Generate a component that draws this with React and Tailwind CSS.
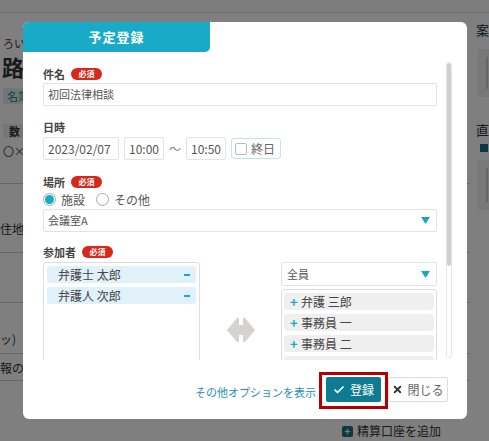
import { Check, X } from "lucide-react";

const font = { fontFamily: '"Noto Sans CJK JP", "Noto Sans", sans-serif' };

function Required() {
  return (
    <span className="ml-[6px] inline-flex h-[12px] w-[31px] items-center justify-center rounded-full bg-[#d6281b] text-[8px] leading-none text-white">
      必須
    </span>
  );
}

function Label({ children, required }) {
  return (
    <div className="flex h-[12px] items-center text-[11px] font-semibold text-[#444]">
      {children}
      {required && <Required />}
    </div>
  );
}

function Triangle() {
  return (
    <svg width="9" height="7" viewBox="0 0 9 7">
      <path d="M0 0h9L4.5 7z" fill="#18a6c4" />
    </svg>
  );
}

const chosen = ["弁護士 太郎", "弁護人 次郎"];
const candidates = ["弁護 三郎", "事務員 一", "事務員 二", ""];

function Background() {
  return (
    <div className="flex h-full w-full flex-col bg-white text-[#333]">
      <div className="h-[13px] border-b border-[#d8d8d8] bg-[#fbfbfb]" />
      <div className="flex flex-1">
        {/* main column */}
        <div className="flex flex-1 flex-col">
          <div className="mt-[1px] flex h-[16px] justify-end gap-[12px] pr-[40px] pt-[8px]">
            <div className="h-[10px] w-[22px] border border-[#ccc]" />
            <div className="h-[10px] w-[42px] border border-[#ccc]" />
            <div className="h-[10px] w-[48px] border border-[#1a8fb0]" />
          </div>
          <div className="pl-[3px] pt-[8px] text-[11px] leading-none">ろい</div>
          <div className="pl-[2px] pt-[6px] text-[22px] font-bold leading-none">路</div>
          <div className="ml-[3px] mt-[11px] h-[16px] w-[30px] bg-[#dfeff0] pl-[4px] text-[11px] leading-[16px] text-[#1d7f8d]">
            名簿
          </div>
          <div className="ml-[3px] mt-[20px] h-[14px] w-[30px] bg-[#eee] pl-[6px] text-[11px] font-bold leading-[14px]">
            数
          </div>
          <div className="pl-[3px] pt-[8px] text-[11px] leading-none">〇×</div>
          <div className="mt-[26px] border-t border-[#ccc]" />
          <div className="pt-[39px] text-[12px] leading-none">住地</div>
          <div className="mt-[17px] border-t border-[#ccc]" />
          <div className="mt-[49px] border-t border-[#ccc]" />
          <div className="pt-[30px] text-[12px] leading-none">ッ)</div>
          <div className="mt-[8px] border-t border-[#ccc]" />
          <div className="pt-[8px] text-[12px] leading-none">報の</div>
          <div className="mt-[6px] border-t border-[#ccc]" />
          <div className="mt-auto flex items-center justify-end gap-[4px] pb-[1px] pr-[29px] text-[12px] text-[#333]">
            <span className="flex h-[11px] w-[11px] items-center justify-center rounded-[2px] bg-[#1b6f82] text-[10px] font-bold leading-none text-white">
              +
            </span>
            精算口座を追加
          </div>
        </div>
        {/* right column */}
        <div className="flex w-[19px] flex-col">
          <div className="pl-[6px] pt-[10px] text-[13px] leading-none">案</div>
          <div className="ml-[8px] mt-[13px] h-[48px] bg-[#f0f0f0] p-[8px]">
            <div className="h-full border border-[#ccc] bg-white" />
          </div>
          <div className="pl-[6px] pt-[26px] text-[13px] leading-none">直</div>
          <div className="ml-[10px] mt-[8px] h-[8px] w-[8px] bg-[#1b6f82]" />
          <div className="ml-[8px] mt-[8px] h-[50px] bg-[#f0f0f0] p-[8px]">
            <div className="h-full border border-[#ccc] bg-white" />
          </div>
        </div>
      </div>
    </div>
  );
}

export default function App() {
  return (
    <div className="relative h-[441px] w-[489px] overflow-hidden" style={font}>
      <Background />
      <div className="absolute inset-0 bg-black/50" />

      {/* Modal */}
      <div className="absolute left-[23px] top-[22px] flex h-[397px] w-[444px] flex-col overflow-hidden rounded-[6px] bg-white">
        <div className="flex h-[30px] w-[187px] items-center justify-center rounded-br-[5px] bg-[#19aac7] text-[13px] font-bold tracking-[1px] text-white">
          予定登録
        </div>

        <div className="relative flex h-[308px] overflow-hidden">
          <div className="w-[414px] shrink-0 pl-[20px] pt-[16px]">
            {/* 件名 */}
            <Label required>件名</Label>
            <div className="mt-[3px] flex h-[23px] w-[394px] items-center rounded-[2px] border border-[#e3e3e3] px-[4px] text-[11px] text-[#555]">
              初回法律相談
            </div>

            {/* 日時 */}
            <div className="mt-[15px]">
              <Label>日時</Label>
            </div>
            <div className="mt-[4px] flex h-[23px] items-center text-[12px] text-[#555]">
              <div className="flex h-full w-[76px] items-center rounded-[2px] border border-[#e3e3e3] pl-[4px]">
                2023/02/07
              </div>
              <div className="ml-[5px] flex h-full w-[40px] items-center justify-center rounded-[2px] border border-[#e3e3e3]">
                10:00
              </div>
              <div className="flex w-[22px] items-center justify-center text-[#888]">～</div>
              <div className="flex h-full w-[40px] items-center justify-center rounded-[2px] border border-[#e3e3e3]">
                10:50
              </div>
              <div className="ml-[5px] flex h-[21px] w-[50px] items-center gap-[4px] rounded-[3px] border border-[#bfe5ee] pl-[3px] text-[#666]">
                <span className="h-[12px] w-[12px] rounded-[2px] border border-[#bbb]" />
                終日
              </div>
            </div>

            {/* 場所 */}
            <div className="mt-[16px]">
              <Label required>場所</Label>
            </div>
            <div className="mt-[5px] flex h-[13px] items-center text-[12px] text-[#555]">
              <span className="flex h-[13px] w-[13px] items-center justify-center rounded-full border border-[#aaa]">
                <span className="h-[9px] w-[9px] rounded-full bg-[#19a9c9]" />
              </span>
              <span className="ml-[5px]">施設</span>
              <span className="ml-[11px] h-[13px] w-[13px] rounded-full border border-[#aaa]" />
              <span className="ml-[5px]">その他</span>
            </div>
            <div className="mt-[3px] flex h-[23px] w-[394px] items-center justify-between rounded-[2px] border border-[#e3e3e3] pl-[4px] pr-[6px] text-[11px] text-[#555]">
              会議室A
              <Triangle />
            </div>

            {/* 参加者 */}
            <div className="mt-[14px]">
              <Label required>参加者</Label>
            </div>
            <div className="mt-[4px] flex">
              <div className="flex h-[110px] w-[157px] shrink-0 flex-col gap-[4px] rounded-[3px] border border-[#ddd] p-[3px]">
                {chosen.map((name) => (
                  <div
                    key={name}
                    className="flex h-[17px] items-center justify-between rounded-[3px] bg-[#e1f1f9] pl-[11px] pr-[6px] text-[12px] text-[#444]"
                  >
                    {name}
                    <span className="h-[2px] w-[6px] bg-[#19a9c9]" />
                  </div>
                ))}
              </div>
              <div className="flex w-[81px] shrink-0 items-start justify-center pt-[55px]">
                <svg width="28" height="26" viewBox="0 0 28 26">
                  <path d="M0 13L10 1h2v7h4V1h2l10 12-10 12h-2v-7h-4v7h-2z" fill="#d5d3cd" />
                </svg>
              </div>
              <div className="flex w-[156px] shrink-0 flex-col">
                <div className="flex h-[24px] items-center justify-between rounded-[2px] border border-[#e3e3e3] pl-[5px] pr-[6px] text-[11px] text-[#555]">
                  全員
                  <Triangle />
                </div>
                <div className="mt-[3px] flex h-[90px] flex-col gap-[4px] rounded-[3px] border border-[#ddd] p-[2px] pt-[3px]">
                  {candidates.map((name, i) => (
                    <div
                      key={i}
                      className="flex h-[17px] shrink-0 items-center rounded-[4px] bg-[#efefef] pl-[6px] text-[12px] text-[#444]"
                    >
                      {name && (
                        <>
                          <span className="w-[11px] text-[13px] font-bold leading-none text-[#19a9c9]">+</span>
                          {name}
                        </>
                      )}
                    </div>
                  ))}
                </div>
              </div>
            </div>
          </div>

          {/* scrollbar */}
          <div className="ml-[9px] mt-[10px] flex h-[296px] w-[6px] flex-col rounded-full border border-[#e6e6e6]">
            <div className="h-[203px] rounded-full bg-[#cfcfcf]" />
          </div>
        </div>

        {/* footer */}
        <div className="flex flex-1 items-start justify-end pr-[19px] pt-[12px]">
          <span className="mt-[12px] text-[11px] text-[#2790b1]">その他オプションを表示</span>
          <div className="ml-[3px] border-[3px] border-[#b40000] px-[4px] pb-[4px] pt-[2px]">
            <div className="flex h-[25px] w-[55px] items-center justify-center gap-[5px] rounded-[2px] bg-[#0f7b92] text-[12px] text-white">
              <Check size={12} strokeWidth={3.5} />
              登録
            </div>
          </div>
          <div className="mt-[5px] flex h-[25px] w-[60px] items-center justify-center gap-[4px] rounded-[2px] border border-[#ddd] text-[12px] text-[#666]">
            <X size={11} strokeWidth={4} className="text-[#333]" />
            閉じる
          </div>
        </div>
      </div>
    </div>
  );
}
